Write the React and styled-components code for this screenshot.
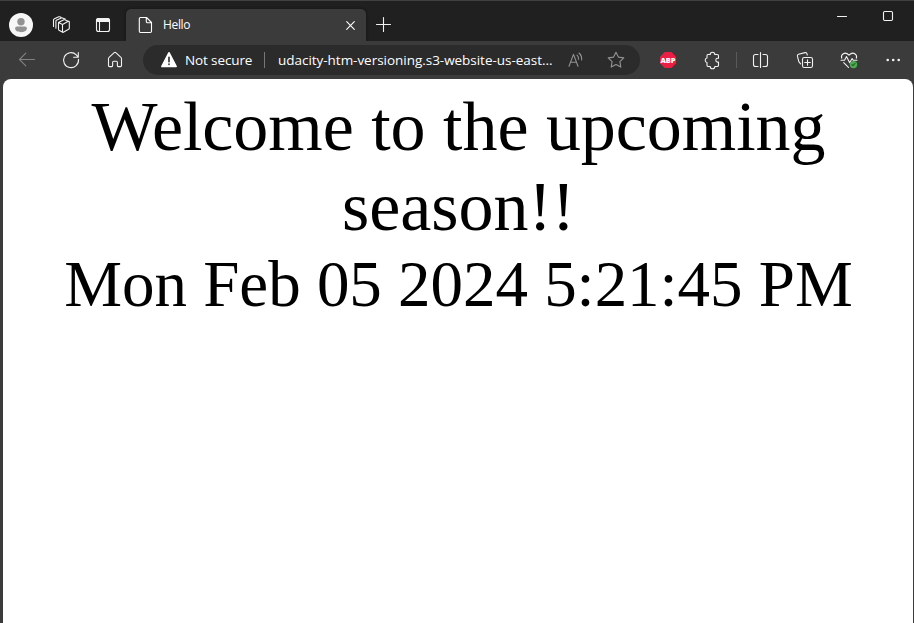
import React from "react";
import styled, { createGlobalStyle } from "styled-components";

const GlobalStyle = createGlobalStyle`
  * { box-sizing: border-box; }
  body { margin: 0; background: #3b3b3b; overflow: hidden; }
`;

const Window = styled.div`
  width: 914px;
  height: 623px;
  display: flex;
  flex-direction: column;
  background: #3b3b3b;
  font-family: "Open Sans", "Noto Sans", sans-serif;
  color: #fff;
`;

const TitleBar = styled.header`
  height: 41px;
  flex: none;
  display: flex;
  align-items: flex-start;
  padding-top: 8px;
  border-top: 1px solid #414141;
  background: #202020;
`;

const IconSlot = styled.button`
  width: ${(p) => p.$width || 44}px;
  height: 32px;
  flex: none;
  display: flex;
  align-items: center;
  justify-content: center;
  padding: 0;
  border: 0;
  background: none;
  color: ${(p) => p.$color || "#f2f2f2"};
`;

const Glyph = styled.svg.attrs({ width: 22, height: 22, viewBox: "0 0 22 22" })`
  display: block;
  flex: none;
  fill: none;
  stroke: currentColor;
  stroke-width: 1.1;
  stroke-linecap: round;
  stroke-linejoin: round;
`;

const Avatar = styled.svg`
  display: block;
`;

const Tab = styled.div`
  width: 240px;
  height: 32px;
  margin-left: 2px;
  display: flex;
  align-items: center;
  padding: 0 5px 0 8px;
  border-radius: 5px 5px 0 0;
  background: #3b3b3b;
  box-shadow: 0 0 3px #111;
`;

const TabTitle = styled.span`
  flex: 1;
  margin-left: 7px;
  font-size: 12px;
  line-height: 16px;
  letter-spacing: -0.35px;
`;

const WindowControls = styled.div`
  display: flex;
  height: 30px;
  margin-left: auto;
  margin-top: -8px;
`;

const Toolbar = styled.nav`
  height: 38px;
  flex: none;
  display: flex;
  align-items: center;
  padding-left: 5px;
  background: #3b3b3b;
`;

const AddressBar = styled.div`
  width: 497px;
  height: 30px;
  flex: none;
  display: flex;
  align-items: center;
  margin: 0 6px;
  padding-left: 15px;
  border-radius: 15px;
  background: #2b2b2b;
  white-space: nowrap;
`;

const AddressText = styled.span`
  flex: none;
  width: ${(p) => p.$width}px;
  padding-left: ${(p) => p.$indent || 0}px;
  font-size: 13.5px;
  line-height: 18px;
  letter-spacing: ${(p) => p.$spacing}px;
`;

const Divider = styled.span`
  flex: none;
  width: 1px;
  height: 16px;
  margin: ${(p) => p.$margin};
  background: ${(p) => p.$color};
`;

const Page = styled.main`
  flex: 1;
  margin: 0 1px 0 3px;
  padding: 8px 8px 8px 9px;
  border-radius: 8px 8px 0 0;
  background: #fff;
  color: #000;
  font-family: "Liberation Serif", "Times New Roman", serif;
  text-align: center;
`;

const Welcome = styled.div`
  font-size: 70px;
  line-height: 80px;
  letter-spacing: -0.04px;
`;

const DateLine = styled.div`
  font-size: 65px;
  line-height: 75px;
  letter-spacing: -0.03px;
`;

const AbpText = styled.text`
  font: 800 7.4px "Open Sans", sans-serif;
  fill: #fff;
  stroke: none;
`;

export default function App() {
  return (
    <Window>
      <GlobalStyle />
      <TitleBar>
        <IconSlot $width={42}>
          <Avatar width="24" height="24" viewBox="0 0 24 24">
            <circle cx="12" cy="12" r="12" fill="#f7f7f7" />
            <circle cx="12" cy="8.7" r="3.7" fill="#929292" />
            <path d="M8 13.4h8a1.9 1.9 0 0 1 1.9 1.9c0 2.6-3 3.9-5.9 3.9s-5.9-1.3-5.9-3.9A1.9 1.9 0 0 1 8 13.4z" fill="#929292" />
          </Avatar>
        </IconSlot>
        <IconSlot $width={40}>
          <Glyph>
            <path d="M11.5 10.4 17.3 7.3q1-.4 1 .7v6.2q0 .7-.7 1.1l-5.3 3q-.8.4-.8-.6zM11.5 10.4 7.5 8.4v6.9q0 .6.5.9l3.7 2.1M7.5 8.4l5.3-2.6q.5-.2 1 0l4 1.6" />
            <path d="M4.9 14.3V7.2q0-.6.5-.9l5-2.4q.5-.2 1 0l2.8 1.1M2.5 12.5V6q0-.6.5-.9l4.7-2.3q.5-.2 1 0l1.2.5" />
          </Glyph>
        </IconSlot>
        <IconSlot $width={42}>
          <Glyph>
            <rect x="4.5" y="4.5" width="13" height="13" rx="2" />
            <path d="M4.5 6.5a2 2 0 0 1 2-2h9a2 2 0 0 1 2 2v1h-13z" fill="currentColor" />
            <path d="M7.5 8v9.5" />
          </Glyph>
        </IconSlot>
        <Tab>
          <Glyph>
            <path d="M6.5 3.5h6l5 5v8.8a1.2 1.2 0 0 1-1.2 1.2H6.5a1.2 1.2 0 0 1-1.2-1.2V4.7a1.2 1.2 0 0 1 1.2-1.2zM12.3 3.7v3.8a1.2 1.2 0 0 0 1.2 1.2h3.8" />
          </Glyph>
          <TabTitle>Hello</TabTitle>
          <Glyph>
            <path d="M7.7 7.7l7.6 7.6M15.3 7.7l-7.6 7.6" />
          </Glyph>
        </Tab>
        <IconSlot $width={34}>
          <Glyph>
            <path d="M4.5 10.5h14M11.5 3.5v14" />
          </Glyph>
        </IconSlot>
        <WindowControls>
          <IconSlot $width={46}>
            <Glyph><path d="M6.5 10.5h9" /></Glyph>
          </IconSlot>
          <IconSlot $width={46}>
            <Glyph><rect x="6.5" y="5.5" width="9" height="9" rx="1.2" /></Glyph>
          </IconSlot>
          <IconSlot $width={3} />
        </WindowControls>
      </TitleBar>

      <Toolbar>
        <IconSlot $color="#818181">
          <Glyph><path d="M18.5 10.5H3.5M9.8 4.2 3.5 10.5l6.3 6.3" /></Glyph>
        </IconSlot>
        <IconSlot>
          <Glyph><path d="M18.5 10.3a7.5 7.5 0 1 1-2.2-4.5l1.7 2M18.3 3.5v4.7h-4.7" /></Glyph>
        </IconSlot>
        <IconSlot>
          <Glyph>
            <path d="M4.5 9.6c0-.5.2-.9.6-1.2l5.1-4.7a1.2 1.2 0 0 1 1.6 0l5.1 4.7c.4.3.6.7.6 1.2v7c0 .7-.3 1-1 1h-2.3c-.5 0-.8-.3-.8-.8v-3.4c0-.7-.5-1.2-1.2-1.2H9.8c-.7 0-1.2.5-1.2 1.2v3.4c0 .5-.3.8-.8.8H5.5c-.7 0-1-.3-1-1z" />
          </Glyph>
        </IconSlot>
        <AddressBar>
          <Glyph>
            <path d="M11 3.9 18 17.4H4z" fill="currentColor" strokeWidth="1.8" />
            <path d="M11 8.2v4.6M11 15v.5" stroke="#2b2b2b" strokeWidth="1.6" />
          </Glyph>
          <AddressText $width={79} $indent={5} $spacing={-0.12}>Not secure</AddressText>
          <Divider $margin="0 13px 0 5px" $color="#777" />
          <AddressText $width={277} $spacing={-0.03}>udacity-htm-versioning.s3-website-us-east...</AddressText>
          <IconSlot $width={42} $color="#929292">
            <Glyph>
              <path d="M4 17.3 8.5 5.4l4.5 11.9M5.6 13.2h5.8" />
              <path d="M12 6.2q1.8 1.5 1.5 4M14 4q3.2 2.8 2.6 7" />
            </Glyph>
          </IconSlot>
          <IconSlot $width={38} $color="#929292">
            <Glyph>
              <path d="m11 3.2 2.4 4.9 5.4.8-3.9 3.8.9 5.4-4.8-2.6-4.8 2.6.9-5.4-3.9-3.8 5.4-.8z" />
            </Glyph>
          </IconSlot>
        </AddressBar>
        <IconSlot>
          <Glyph>
            <path d="M7.7 3h6.6L19 7.7v6.6L14.3 19H7.7L3 14.3V7.7z" fill="#ed1e45" stroke="none" />
            <AbpText x="3.5" y="13.7" textLength="15">ABP</AbpText>
          </Glyph>
        </IconSlot>
        <IconSlot>
          <Glyph>
            <path d="M6.8 5.5h2.4a2.3 2.3 0 0 1 4.6 0h2.4c.8 0 1.3.5 1.3 1.3v2.5h-.8a1.9 1.9 0 0 0 0 3.8h.8v3.1c0 .8-.5 1.3-1.3 1.3h-2.4a2.3 2.3 0 0 1-4.6 0H7.3c-.8 0-1.3-.5-1.3-1.3v-2.7a2.3 2.3 0 0 1 0-4.5V6.8c0-.8.3-1.3.8-1.3z" />
          </Glyph>
        </IconSlot>
        <Divider $margin="0 2px" $color="#5a5a5a" />
        <IconSlot>
          <Glyph>
            <path d="M8 5.5H5.5a2 2 0 0 0-2 2v8a2 2 0 0 0 2 2H8M13 5.5h2.5a2 2 0 0 1 2 2v8a2 2 0 0 1-2 2H13M10.5 3.5v15" />
          </Glyph>
        </IconSlot>
        <IconSlot>
          <Glyph>
            <rect x="8.5" y="8.5" width="10" height="10" rx="1.8" />
            <path d="M13.5 10.7v5.6M10.7 13.5h5.6M6.6 14.8 4.8 12.6 3.4 7.2c-.2-1 .2-1.7 1.1-2l6.6-1.6c.8-.2 1.5.2 1.8 1l.4 1.4" />
          </Glyph>
        </IconSlot>
        <IconSlot>
          <Glyph>
            <path d="M3.7 9.2C2.5 5.5 6.8 1.9 11 6.2c4.3-4.3 8.5-.7 7.4 3M3 11.3h3.5l2-3.8 3.2 6.2 2.4-4.2 1.1 1.8H19M5.7 13.7l4.8 4.6" />
            <circle cx="15.5" cy="15.6" r="3.7" fill="#4cac50" stroke="none" />
            <path d="m13.9 15.7 1 1 2.2-2.3" stroke="#245e28" />
          </Glyph>
        </IconSlot>
        <IconSlot>
          <Glyph>
            <path d="M5.7 11h.01M11.2 11h.01M16.7 11h.01" strokeWidth="2.6" />
          </Glyph>
        </IconSlot>
      </Toolbar>

      <Page>
        <Welcome>Welcome to the upcoming season!!</Welcome>
        <DateLine>Mon Feb 05 2024 5:21:45 PM</DateLine>
      </Page>
    </Window>
  );
}
